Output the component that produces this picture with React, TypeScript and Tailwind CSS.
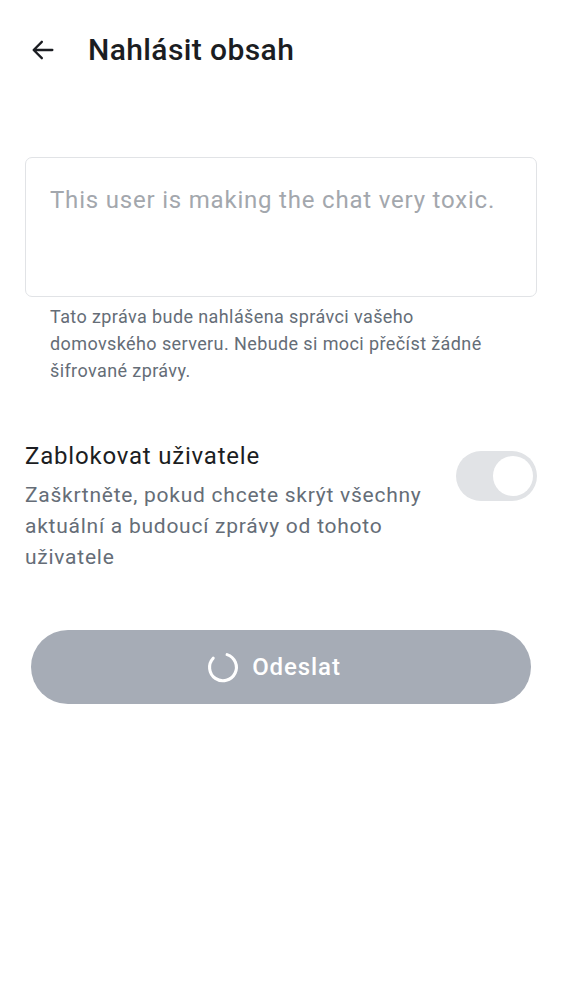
import React, { useState } from "react";

const App: React.FC = () => {
  const [blockUser, setBlockUser] = useState(false);

  return (
    <div className="min-h-[1000px] w-full bg-white font-['Roboto',sans-serif] text-[#1b1d22]">
      {/* Hlavička */}
      <div className="flex h-[100px] items-center pl-[28px]">
        <button type="button" className="flex h-[30px] w-[30px] items-center justify-center">
          <svg width="28" height="28" viewBox="0 0 24 24" fill="none">
            <path
              d="M20 12H4.5M11 5l-7 7 7 7"
              stroke="#1b1d22"
              strokeWidth="2"
              strokeLinecap="round"
              strokeLinejoin="round"
            />
          </svg>
        </button>
        <h1 className="ml-[30px] text-[30px] font-medium leading-none tracking-[0.4px]">Nahlásit obsah</h1>
      </div>

      <div className="px-[25px] pt-[57px]">
        {/* Důvod */}
        <div className="h-[140px] w-full rounded-[7px] border border-[#e1e3e6] px-[24px] pt-[26px]">
          <textarea
            className="h-full w-full resize-none text-[24px] leading-[32px] tracking-[0.8px] text-[#1b1d22] outline-none placeholder:text-[#a3a7ad]"
            placeholder="This user is making the chat very toxic."
          />
        </div>
        <p className="mt-[6px] pl-[25px] pr-[20px] text-[18px] leading-[27px] tracking-[0.4px] text-[#656d77]">
          Tato zpráva bude nahlášena správci vašeho domovského serveru. Nebude si moci přečíst žádné šifrované
          zprávy.
        </p>

        {/* Blokování */}
        <div className="mt-[56px] flex items-start justify-between">
          <div className="max-w-[410px]">
            <div className="text-[24px] leading-[32px] tracking-[0.8px]">Zablokovat uživatele</div>
            <div className="mt-[8px] text-[21px] leading-[31px] tracking-[0.75px] text-[#656d77]">
              Zaškrtněte, pokud chcete skrýt všechny aktuální a budoucí zprávy od tohoto uživatele
            </div>
          </div>
          <button
            type="button"
            onClick={() => setBlockUser(!blockUser)}
            className="mt-[11px] flex h-[50px] w-[81px] shrink-0 items-center justify-end rounded-full bg-[#e1e3e6] px-[4px]"
          >
            <span className="h-[40px] w-[40px] rounded-full bg-white" />
          </button>
        </div>
      </div>

      {/* Odeslat */}
      <div className="px-[31px] pt-[57px]">
        <button
          type="button"
          className="flex h-[74px] w-full items-center justify-center gap-[12px] rounded-full bg-[#a6acb6] pr-[14px] text-white"
        >
          <svg width="33" height="33" viewBox="0 0 32 32" fill="none">
            <path
              d="M19.5 3.5A13 13 0 1 1 6 7"
              stroke="white"
              strokeWidth="3"
              strokeLinecap="round"
            />
          </svg>
          <span className="text-[24px] font-medium tracking-[0.9px]">Odeslat</span>
        </button>
      </div>
    </div>
  );
};

export default App;
